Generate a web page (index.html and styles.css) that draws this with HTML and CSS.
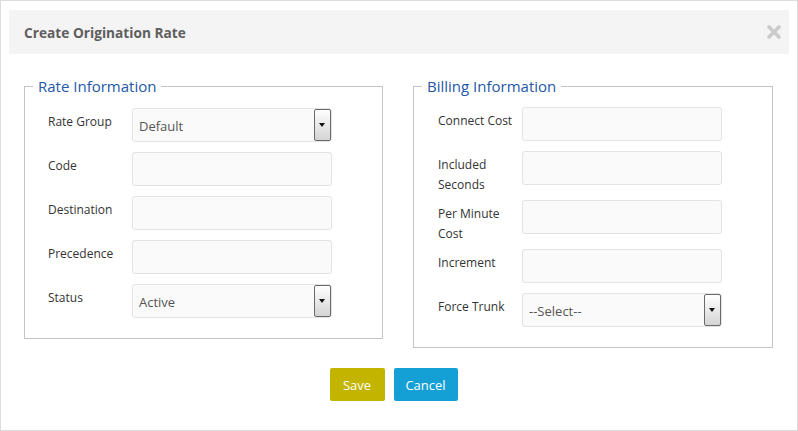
FILE: index.html
```html
<!DOCTYPE html>
<html>
<head>
<meta charset="utf-8">
<link rel="stylesheet" href="styles.css">
</head>
<body>
<div class="frame">
  <div class="header">
    <span class="title">Create Origination Rate</span>
    <svg class="close" width="14" height="14" viewBox="0 0 14 14"><path d="M2 2 L12 12 M12 2 L2 12" stroke="#cbcbcb" stroke-width="3.6" stroke-linecap="round"/></svg>
  </div>
  <div class="cols">
    <fieldset class="box">
      <legend>Rate Information</legend>
      <div class="rows">
        <div class="row"><label>Rate Group</label><div class="sel"><span class="val">Default</span><span class="btn"></span></div></div>
        <div class="row"><label>Code</label><div class="inp"></div></div>
        <div class="row"><label>Destination</label><div class="inp"></div></div>
        <div class="row"><label>Precedence</label><div class="inp"></div></div>
        <div class="row"><label>Status</label><div class="sel"><span class="val">Active</span><span class="btn"></span></div></div>
      </div>
    </fieldset>
    <fieldset class="box">
      <legend>Billing Information</legend>
      <div class="rows right">
        <div class="row"><label>Connect Cost</label><div class="inp"></div></div>
        <div class="row"><label>Included Seconds</label><div class="inp"></div></div>
        <div class="row"><label>Per Minute Cost</label><div class="inp"></div></div>
        <div class="row"><label>Increment</label><div class="inp"></div></div>
        <div class="row"><label>Force Trunk</label><div class="sel"><span class="val">--Select--</span><span class="btn"></span></div></div>
      </div>
    </fieldset>
  </div>
  <div class="actions">
    <button class="b save">Save</button><button class="b cancel">Cancel</button>
  </div>
</div>
</body>
</html>
```
FILE: styles.css
```css
html, body { margin: 0; padding: 0; background: #fff; }
body { font-family: "Open Sans", "DejaVu Sans", sans-serif; }
.frame {
  width: 798px; height: 431px; box-sizing: border-box;
  border: 1px solid #dcdcdc; padding: 9px 8px;
}
.header {
  height: 44px; background: #f4f4f4;
  display: flex; align-items: center; justify-content: space-between;
  padding: 0 8px 0 15px;
}
.title { font-size: 13.7px; font-weight: 700; color: #5e5e5e; }
.close { display: block; margin-top: -1px; }
.cols {
  display: grid; grid-template-columns: 359px 360px; column-gap: 30px;
  padding: 0 0 0 15px; margin-top: 22px; align-items: start;
}
.box {
  margin: 0; padding: 0 0 10px 0; border: 1px solid #c4c4c4; min-width: 0;
}
.box legend {
  margin-left: 8px; padding: 0 5px; font-size: 15px; line-height: 20px;
  color: #2458a6;
}
.rows { padding: 12px 0 0 23px; }
.rows.right { padding-top: 11px; padding-left: 24px; }
.row { display: flex; min-height: 39px; margin-bottom: 5px; align-items: flex-start; }
.row label {
  width: 84px; flex: none; font-size: 12px; line-height: 20px; color: #333;
  padding-top: 4px; box-sizing: border-box; padding-right: 8px;
}
.inp, .sel {
  width: 200px; height: 34px; box-sizing: border-box;
  background: #fafafa; border: 1px solid #e3e3e3; border-radius: 3px;
}
.sel { position: relative; display: flex; align-items: center; }
.sel .val { font-size: 13px; color: #555; padding-left: 6px; margin-top: 1px; }
.sel .btn {
  position: absolute; right: 0; top: 0; width: 17px; height: 32px; box-sizing: border-box;
  border: 1px solid #6a6a6a; border-radius: 2px;
  background: linear-gradient(#ffffff, #d4d4d4);
}
.sel .btn::after {
  content: ""; position: absolute; left: 4px; top: 13px;
  border-left: 3.5px solid transparent; border-right: 3.5px solid transparent;
  border-top: 4px solid #111;
}
.actions { text-align: center; margin-top: 20px; padding-right: 1px; }
.b {
  font-family: inherit; font-size: 13px; color: #fff; border: 0; border-radius: 2px;
  height: 33px; margin-right: 10px; cursor: pointer; box-sizing: border-box;
}
.save { background: #c3b400; width: 55px; padding: 0; margin-right: 9px; }
.cancel { background: #14a0d5; width: 64px; padding: 0; }
```
